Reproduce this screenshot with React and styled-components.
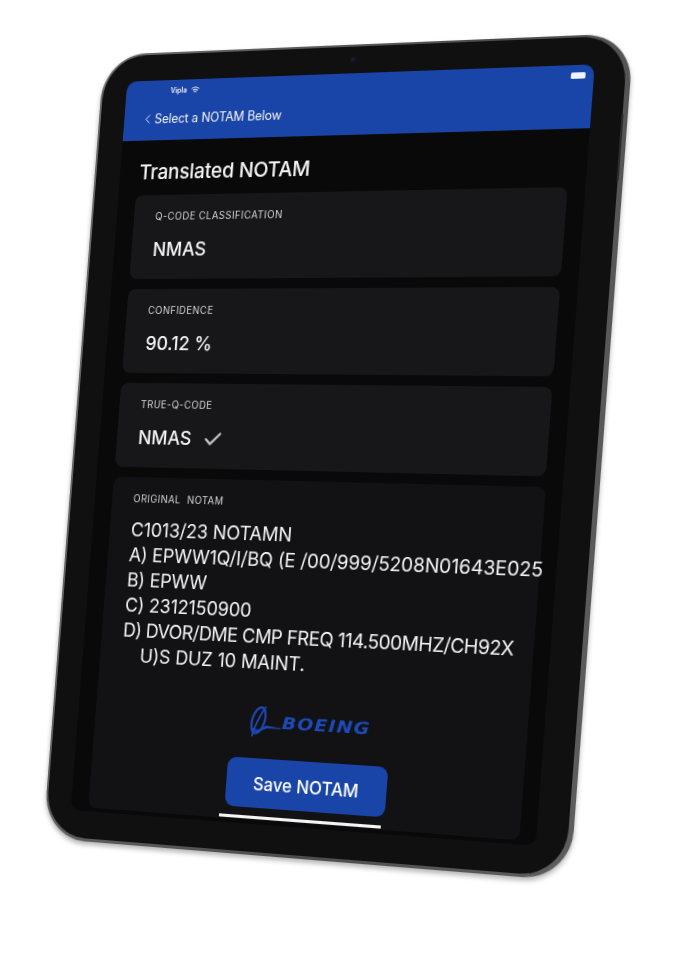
import React from "react";
import styled, { createGlobalStyle } from "styled-components";
import { ChevronLeft, Check } from "lucide-react";

const W = 540;
const H = 790;

// corners of the tablet in the photo: TL, TR, BR, BL
const quad = [
  [104, 55],
  [634, 33],
  [570, 881],
  [43, 838],
];

const perspective = () => {
  const [[x0, y0], [x1, y1], [x2, y2], [x3, y3]] = quad;
  const sx = x0 - x1 + x2 - x3;
  const sy = y0 - y1 + y2 - y3;
  const dx1 = x1 - x2;
  const dx2 = x3 - x2;
  const dy1 = y1 - y2;
  const dy2 = y3 - y2;
  const den = dx1 * dy2 - dx2 * dy1;
  const g = (sx * dy2 - dx2 * sy) / den;
  const h = (dx1 * sy - sx * dy1) / den;
  const a = x1 - x0 + g * x1;
  const b = x3 - x0 + h * x3;
  const d = y1 - y0 + g * y1;
  const e = y3 - y0 + h * y3;
  return `matrix3d(${a / W},${d / W},0,${g / W},${b / H},${e / H},0,${h / H},0,0,1,0,${x0},${y0},0,1)`;
};

const GlobalStyle = createGlobalStyle`
  html, body {
    margin: 0;
    height: 979px;
    background: #fff;
    overflow: hidden;
  }
`;

const Tablet = styled.div`
  width: ${W}px;
  height: ${H}px;
  box-sizing: border-box;
  padding: 2px 5px 3px 2px;
  border-radius: 46px;
  background: linear-gradient(100deg, #6a6a6a, #4c4c4c 60%, #5e5e5e);
  box-shadow: 0 3px 5px rgba(0, 0, 0, 0.3);
  transform-origin: 0 0;
  transform: ${perspective()};
  position: relative;
  font-family: Inter, "Liberation Sans", sans-serif;
  color: #f4f4f4;
  filter: blur(0.3px);
`;

const Bezel = styled.div`
  height: 100%;
  box-sizing: border-box;
  padding: 26px 30px 27px 26px;
  border-radius: 44px;
  background: #101011;
`;

const Camera = styled.span`
  position: absolute;
  top: 12px;
  left: 48.7%;
  width: 5px;
  height: 5px;
  border-radius: 50%;
  background: #141c2c;
`;

const SideButton = styled.span`
  position: absolute;
  top: 76px;
  right: 4px;
  width: 2px;
  height: 62px;
  border-radius: 2px;
  background: #2b2b2b;
`;

const Screen = styled.div`
  position: relative;
  height: 100%;
  display: flex;
  flex-direction: column;
  border-radius: 10px;
  overflow: hidden;
  background: #09090a;
`;

const NavBar = styled.header`
  height: 60px;
  flex: none;
  box-sizing: border-box;
  padding: 4px 8px 0 18px;
  background: #1a45a8;
  display: flex;
  flex-direction: column;
`;

const StatusBar = styled.div`
  display: flex;
  align-items: center;
  gap: 4px;
  height: 12px;
  padding-left: 30px;
  font-size: 7.2px;
  font-weight: 600;
`;

const Battery = styled.span`
  margin-left: auto;
  width: 14px;
  height: 6px;
  border-radius: 1.5px;
  background: #f2f4fb;
`;

const BackLink = styled.div`
  display: flex;
  align-items: center;
  margin-top: 15px;
  font-size: 12.6px;
  letter-spacing: -0.1px;
`;

const Content = styled.main`
  flex: 1;
  min-height: 0;
  display: flex;
  flex-direction: column;
  gap: 10px;
  padding: 0 17px 4px 19px;
`;

const Title = styled.h1`
  margin: 19px 0 0 2px;
  font-size: 20.5px;
  line-height: 26px;
  font-weight: 500;
  letter-spacing: -0.2px;
`;

const Card = styled.section`
  flex: none;
  height: 84px;
  box-sizing: border-box;
  padding: 15px 20px 0 23px;
  border-radius: 8px;
  background: #17171a;
`;

const NotamCard = styled(Card)`
  flex: 1;
  height: auto;
  margin-right: -1px;
  background: #121214;
`;

const Label = styled.div`
  font-size: 10px;
  line-height: 12px;
  letter-spacing: 0.5px;
  color: #d6d6d6;
`;

const Value = styled.div`
  display: flex;
  align-items: center;
  gap: 12px;
  margin-top: 16px;
  font-size: 19px;
  line-height: 24px;
  font-weight: 500;

  svg {
    color: #c4c4c4;
  }
`;

const NotamText = styled.div`
  margin-top: 14px;
  font-size: 19px;
  line-height: 24.9px;
  white-space: nowrap;
  letter-spacing: -0.1px;
`;

const NotamLine = styled.div`
  padding-left: ${(props) => (props.$indent ? "20px" : "0")};
  letter-spacing: ${(props) => (props.$tight ? "-0.5px" : "inherit")};
`;

const Footer = styled.div`
  display: flex;
  flex-direction: column;
  align-items: center;
  padding-left: 9px;
`;

const LogoRow = styled.div`
  display: flex;
  align-items: center;
  margin-top: 28.6px;
  color: #1d4ab6;
`;

const LogoWord = styled.span`
  display: inline-block;
  font-family: "DejaVu Sans", sans-serif;
  font-weight: 700;
  font-style: italic;
  font-size: 16px;
  letter-spacing: 1px;
  transform: scaleX(1.2);
  transform-origin: 0 50%;
  margin-right: 16px;
`;

const SaveButton = styled.button`
  width: 164px;
  height: 48px;
  margin-top: 20px;
  border: 0;
  border-radius: 9px;
  background: #1a45a8;
  color: #fff;
  font: 500 17.2px Inter, "Liberation Sans", sans-serif;
`;

const HomeBar = styled.span`
  position: absolute;
  left: 50%;
  bottom: 5px;
  width: 166px;
  height: 3px;
  margin-left: -80px;
  background: #f4f4f4;
`;

const Wifi = () => (
  <svg width="9" height="7" viewBox="0 0 18 14" fill="none" stroke="currentColor" strokeWidth="2">
    <path d="M1 5c4.500-4 11.500-4 16 0" />
    <path d="M4 8.500c3-2.500 7-2.500 10 0" />
    <path d="M7 11.500c1.200-1 2.800-1 4 0" />
  </svg>
);

const BoeingMark = () => (
  <svg width="34" height="32" viewBox="0 0 34 32" fill="none" stroke="currentColor" strokeLinecap="round">
    <ellipse cx="9.500" cy="15" rx="6.500" ry="13" transform="rotate(14 9.500 15)" strokeWidth="2.200" />
    <path d="M16 2C11 10 6 20 4 30" strokeWidth="1.800" />
    <path d="M4 23c6 4 11-2 14-3l15 2-14 0c-5 2-10 6-15 3" fill="currentColor" strokeWidth="0.600" />
  </svg>
);

const fields = [
  { label: "Q-CODE CLASSIFICATION", value: "NMAS" },
  { label: "CONFIDENCE", value: "90.12 %" },
  { label: "TRUE-Q-CODE", value: "NMAS", checked: true },
];

const App = () => {
  return (
    <>
      <GlobalStyle />
      <Tablet>
        <Bezel>
          <Screen>
            <NavBar>
              <StatusBar>
                <span>Vipla</span>
                <Wifi />
                <Battery />
              </StatusBar>
              <BackLink>
                <ChevronLeft size={15} strokeWidth={1.5} />
                Select a NOTAM Below
              </BackLink>
            </NavBar>
            <Content>
              <Title>Translated NOTAM</Title>
              {fields.map((field) => (
                <Card key={field.label}>
                  <Label>{field.label}</Label>
                  <Value>
                    {field.value}
                    {field.checked && <Check size={22} strokeWidth={2.6} />}
                  </Value>
                </Card>
              ))}
              <NotamCard>
                <Label>ORIGINAL&nbsp; NOTAM</Label>
                <NotamText>
                  <NotamLine>C1013/23 NOTAMN</NotamLine>
                  <NotamLine>A) EPWW1Q/I/BQ (E /00/999/5208N01643E025</NotamLine>
                  <NotamLine>B) EPWW</NotamLine>
                  <NotamLine>C) 2312150900</NotamLine>
                  <NotamLine $tight>D) DVOR/DME CMP FREQ 114.500MHZ/CH92X</NotamLine>
                  <NotamLine $indent>U)S DUZ 10 MAINT.</NotamLine>
                </NotamText>
                <Footer>
                  <LogoRow>
                    <BoeingMark />
                    <LogoWord>BOEING</LogoWord>
                  </LogoRow>
                  <SaveButton>Save NOTAM</SaveButton>
                </Footer>
              </NotamCard>
            </Content>
            <HomeBar />
          </Screen>
        </Bezel>
        <Camera />
        <SideButton />
      </Tablet>
    </>
  );
};

export default App;
